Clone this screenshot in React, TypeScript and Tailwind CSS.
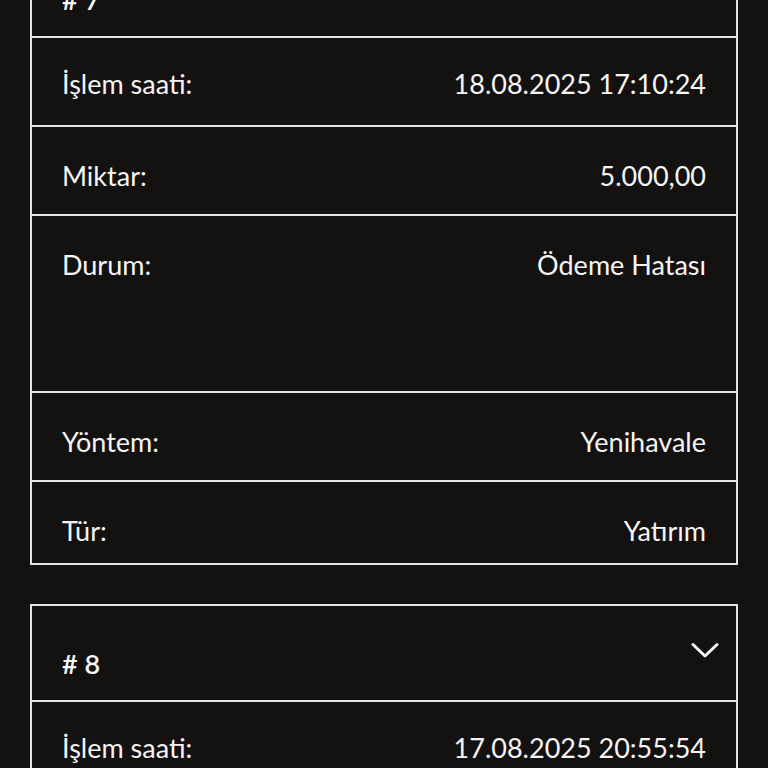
import React from "react";

type Row = { label: string; value: string; h?: string; pt?: string };

interface Tx {
  no: number;
  rows: Row[];
}

const txs: Tx[] = [
  {
    no: 7,
    rows: [
      { label: "İşlem saati:", value: "18.08.2025 17:10:24", pt: "pt-[31px]" },
      { label: "Miktar:", value: "5.000,00" },
      { label: "Durum:", value: "Ödeme Hatası", h: "h-[177px]" },
      { label: "Yöntem:", value: "Yenihavale" },
      { label: "Tür:", value: "Yatırım", h: "h-[83px]" },
    ],
  },
  {
    no: 8,
    rows: [
      { label: "İşlem saati:", value: "17.08.2025 20:55:54", pt: "pt-[31px]" },
      { label: "Miktar:", value: "5.000,00" },
      { label: "Durum:", value: "Ödeme Hatası", h: "h-[177px]" },
      { label: "Yöntem:", value: "Yenihavale" },
      { label: "Tür:", value: "Yatırım", h: "h-[83px]" },
    ],
  },
];

function Chevron() {
  return (
    <svg width="28" height="17" viewBox="0 0 28 17" fill="none">
      <path
        d="M2 2.5 L14 14 L26 2.5"
        stroke="#f4f4f4"
        strokeWidth="3"
        strokeLinecap="round"
        strokeLinejoin="round"
      />
    </svg>
  );
}

function Card({ tx, first }: { tx: Tx; first?: boolean }) {
  return (
    <div
      className={
        first
          ? "mt-[-60px] border-2 border-[#e4e4e4]"
          : "border-2 border-[#e4e4e4]"
      }
    >
      <div className="h-[94px] flex justify-between pl-[30px] pr-[17px]">
        <div className="pt-[43px] text-[27px] leading-[30px] font-semibold">
          # {tx.no}
        </div>
        <div className="pt-[36px]">
          <Chevron />
        </div>
      </div>
      {tx.rows.map((r) => (
        <div
          key={r.label}
          className={
            (r.h ?? "h-[89px]") +
            " " +
            (r.pt ?? "pt-[34px]") +
            " border-t-2 border-[#e4e4e4] flex justify-between px-[30px] text-[27px] leading-[30px]"
          }
        >
          <span>{r.label}</span>
          <span>{r.value}</span>
        </div>
      ))}
    </div>
  );
}

export default function App() {
  return (
    <div className="min-h-screen bg-[#141111] text-[#f5f5f5] font-['Lato',sans-serif] overflow-hidden">
      <div className="px-[30px] flex flex-col gap-[39px] pb-[40px]">
        {txs.map((tx, i) => (
          <Card key={tx.no} tx={tx} first={i === 0} />
        ))}
      </div>
    </div>
  );
}
